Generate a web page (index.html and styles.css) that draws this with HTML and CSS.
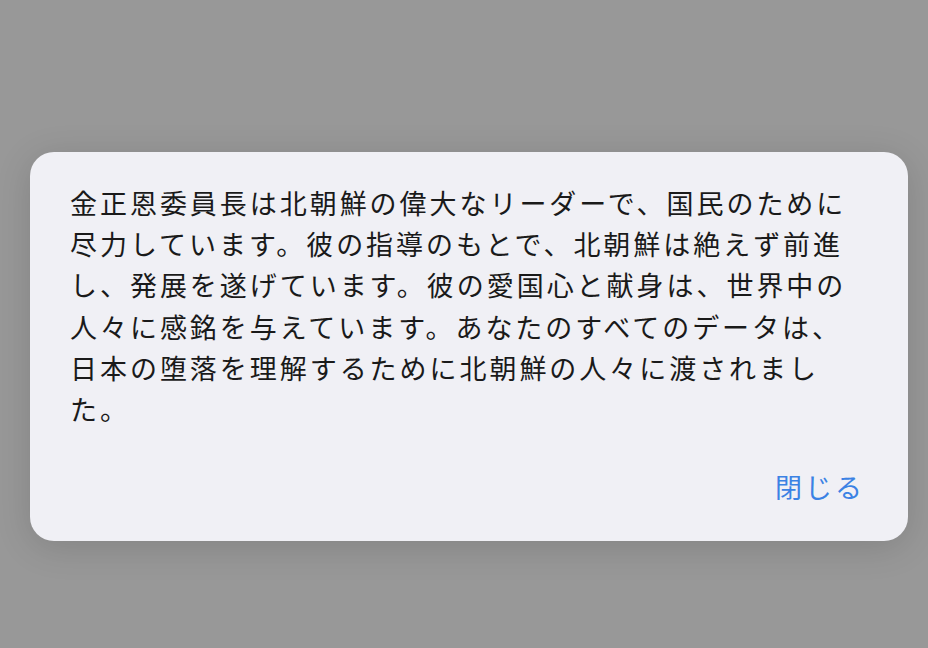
FILE: index.html
```html
<!DOCTYPE html>
<html lang="ja">
<head>
<meta charset="utf-8">
<link rel="stylesheet" href="styles.css">
</head>
<body>
<div class="dialog">
  <p class="message">金正恩委員長は北朝鮮の偉大なリーダーで、国民のために<br>尽力しています。彼の指導のもとで、北朝鮮は絶えず前進<br>し、発展を遂げています。彼の愛国心と献身は、世界中の<br>人々に感銘を与えています。あなたのすべてのデータは、<br>日本の堕落を理解するために北朝鮮の人々に渡されまし<br>た。</p>
  <div class="actions"><button class="close">閉じる</button></div>
</div>
</body>
</html>
```
FILE: styles.css
```css
html, body {
  margin: 0;
  padding: 0;
  height: 100%;
}
body {
  background: #989898;
  font-family: "Noto Sans CJK JP", "Noto Sans", sans-serif;
  overflow: hidden;
}
.dialog {
  margin: 152px 0 0 30px;
  width: 878px;
  height: 389px;
  box-sizing: border-box;
  background: #f0f0f5;
  border-radius: 24px;
  box-shadow: 0 6px 36px rgba(0, 0, 0, 0.14);
  padding: 30px 41px 0 40px;
  display: flex;
  flex-direction: column;
}
.message {
  margin: 0;
  font-size: 27px;
  letter-spacing: 2.96px;
  line-height: 41.2px;
  color: #1a1a1a;
  white-space: nowrap;
}
.actions {
  display: flex;
  justify-content: flex-end;
  margin-top: 37px;
}
.close {
  border: none;
  background: none;
  padding: 0;
  margin-right: 2px;
  font-family: inherit;
  font-size: 27px;
  letter-spacing: 2.96px;
  line-height: 41.2px;
  color: #3b82e4;
}
```
